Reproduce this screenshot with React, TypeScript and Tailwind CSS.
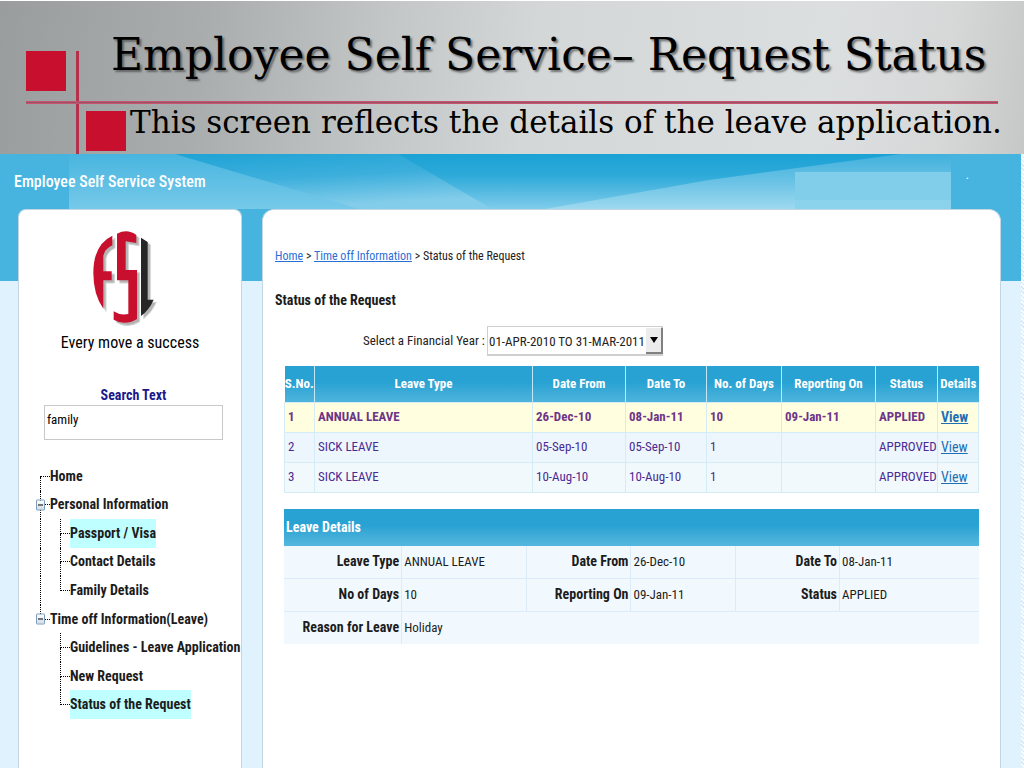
import React from "react";

type TreeNode = {
  label: string;
  level: 0 | 1;
  first?: boolean;
  last?: boolean;
  expandable?: boolean;
  trunk?: boolean;
  active?: boolean;
};

const tree: TreeNode[] = [
  { label: "Home", level: 0, first: true },
  { label: "Personal Information", level: 0, expandable: true },
  { label: "Passport / Visa", level: 1, trunk: true, active: true },
  { label: "Contact Details", level: 1, trunk: true },
  { label: "Family Details", level: 1, trunk: true, last: true },
  { label: "Time off Information(Leave)", level: 0, expandable: true, last: true },
  { label: "Guidelines - Leave Application", level: 1 },
  { label: "New Request", level: 1 },
  { label: "Status of the Request", level: 1, last: true, active: true },
];

const requests = [
  { no: 1, type: "ANNUAL LEAVE", from: "26-Dec-10", to: "08-Jan-11", days: 10, reporting: "09-Jan-11", status: "APPLIED" },
  { no: 2, type: "SICK LEAVE", from: "05-Sep-10", to: "05-Sep-10", days: 1, reporting: "", status: "APPROVED" },
  { no: 3, type: "SICK LEAVE", from: "10-Aug-10", to: "10-Aug-10", days: 1, reporting: "", status: "APPROVED" },
];

const columns = [
  { label: "S.No.", width: "w-[30px]" },
  { label: "Leave Type", width: "" },
  { label: "Date From", width: "w-[93px]" },
  { label: "Date To", width: "w-[81px]" },
  { label: "No. of Days", width: "w-[75px]" },
  { label: "Reporting On", width: "w-[94px]" },
  { label: "Status", width: "w-[62px]" },
  { label: "Details", width: "w-[41px]" },
];

function SlideHeader() {
  return (
    <header className="relative mt-px h-[153px] bg-[linear-gradient(97deg,#999d9e_0%,#a9adae_20%,#c3c7c8_38%,#d3d7d8_52%,#dcdfe0_80%,#d6d8d8_92%,#c6c8c8_100%)] font-['DejaVu_Serif',serif] text-black">
      <svg className="absolute left-[26px] top-[50px]" width="101" height="103" viewBox="0 0 101 103" aria-hidden="true">
        <rect x="0" y="0" width="40" height="40" fill="#c8102e" />
        <rect x="60" y="60" width="40" height="40" fill="#c8102e" />
        <rect x="50" y="0" width="3" height="103" fill="#b5304a" />
      </svg>
      <div className="absolute left-[26px] right-[26px] top-[100px] h-[3px] border-y border-[#c4566e] bg-[#99506a]" />
      <h1 className="relative whitespace-nowrap pl-[111px] pt-[26px] text-[44px] leading-[56px] [text-shadow:2px_2px_2px_rgba(70,70,70,0.7)]">
        Employee Self Service– Request Status
      </h1>
      <p className="relative whitespace-nowrap pl-[130px] pt-[19px] text-[31px] leading-[40px]">
        This screen reflects the details of the leave application.
      </p>
    </header>
  );
}

function Banner() {
  return (
    <div className="relative h-[55px] overflow-hidden">
      <div className="absolute inset-y-0 left-[69px] right-[70px]">
        <svg className="h-full w-full" viewBox="0 0 882 55" preserveAspectRatio="none" aria-hidden="true">
          <defs>
            <linearGradient id="b-left" x1="0" y1="0" x2="0" y2="1">
              <stop offset="0" stopColor="#48b5df" />
              <stop offset="1" stopColor="#76c9e9" />
            </linearGradient>
            <linearGradient id="b-mid" x1="0" y1="0" x2="0.3" y2="1">
              <stop offset="0" stopColor="#1fa3d5" />
              <stop offset="0.5" stopColor="#3dafdc" />
              <stop offset="1" stopColor="#84cdea" />
            </linearGradient>
            <linearGradient id="b-dark" x1="0" y1="0" x2="0" y2="1">
              <stop offset="0" stopColor="#1ba2d4" />
              <stop offset="0.4" stopColor="#2eaad9" />
              <stop offset="1" stopColor="#80cceb" />
            </linearGradient>
            <linearGradient id="b-right" x1="0" y1="0" x2="0" y2="1">
              <stop offset="0" stopColor="#41b1dd" />
              <stop offset="0.5" stopColor="#69c2e5" />
              <stop offset="1" stopColor="#9ed9ef" />
            </linearGradient>
          </defs>
          <rect width="882" height="55" fill="url(#b-left)" />
          <polygon points="106,0 332,0 423,55 290,55" fill="url(#b-mid)" />
          <polygon points="329,0 882,0 882,55 423,55" fill="url(#b-dark)" />
          <polygon points="476,55 640,26 832,0 882,0 882,55" fill="url(#b-right)" />
          <rect x="726" y="18" width="156" height="37" fill="#80ceea" />
          <rect x="726" y="46" width="156" height="9" fill="#93d5ed" opacity="0.6" />
        </svg>
      </div>
      <div className="relative flex items-start justify-between pl-[14px] pr-[52px] pt-[17px] text-white">
        <h2 className="text-[16px] font-medium leading-[22px]">Employee Self Service System</h2>
        <span className="text-[12px] leading-[8px]">.</span>
      </div>
    </div>
  );
}

function Logo() {
  const f = "M157 48 Q100 75 100 160 Q100 225 130 267 L130 182 L155 182 L155 155 L130 155 L130 108 Q134 88 157 77Z";
  const s = "M171 42 Q202 26 229 46 L229 70 L197 65 L197 151 L231 151 L231 298 Q195 320 161 300 L161 275 Q180 288 205 283 L205 182 L171 182Z";
  const l = "M243 54 L263 67 L263 240 L281 240 Q268 270 243 289Z";
  return (
    <svg width="70" height="100" viewBox="90 25 210 300" role="img" aria-label="FSL">
      <g transform="translate(8 8)" fill="#b4b4b4" stroke="#d6d6d6" strokeWidth="3">
        <path d={f} />
        <path d={s} />
        <path d={l} />
      </g>
      <path fill="#c8102e" d={f} />
      <path fill="#c8102e" d={s} />
      <path fill="#262626" d={l} />
    </svg>
  );
}

function Toggle({ label }: { label: string }) {
  return (
    <button
      type="button"
      aria-label={"Collapse " + label}
      className="absolute left-0 top-1/2 flex h-[11px] w-[9px] -translate-y-1/2 items-center justify-center rounded-[1px] border border-[#7b9ebd] bg-gradient-to-b from-white to-[#d3dbe3]"
    >
      <span className="h-px w-[5px] bg-black" />
    </button>
  );
}

function TreeRow({ node }: { node: TreeNode }) {
  const line = "border-dotted border-black ";
  return (
    <li className="relative flex items-stretch">
      {node.level === 0 ? (
        <span className="flex w-[14px] flex-col pl-1">
          <span className={line + "flex-1 border-b " + (node.first ? "" : "border-l")} />
          <span className={line + "flex-1 " + (node.last ? "" : "border-l")} />
        </span>
      ) : (
        <>
          <span className="flex w-6 pl-1">
            <span className={line + (node.trunk ? "border-l" : "")} />
          </span>
          <span className="flex w-[10px] flex-col">
            <span className={line + "flex-1 border-b border-l"} />
            <span className={line + "flex-1 " + (node.last ? "" : "border-l")} />
          </span>
        </>
      )}
      {node.expandable && <Toggle label={node.label} />}
      <a
        href="#"
        className={"flex items-center whitespace-nowrap " + (node.active ? "bg-[#bfffff]" : "")}
      >
        {node.label}
      </a>
    </li>
  );
}

function Sidebar() {
  return (
    <aside className="flex w-[224px] shrink-0 flex-col rounded-t-lg border border-b-0 border-[#c3d6e2] bg-white">
      <div className="flex flex-col items-center pt-[18px]">
        <div className="-ml-[10px]">
          <Logo />
        </div>
        <p className="pt-[5px] text-[16px] leading-5">Every move a success</p>
      </div>
      <div className="flex flex-col pl-[25px] pr-[18px] pt-8">
        <label htmlFor="search" className="text-center text-[14px] font-bold leading-5 text-[#1a1a8c]">
          Search Text
        </label>
        <input
          id="search"
          type="text"
          defaultValue="family"
          className="h-[35px] w-full border border-[#c8c8c8] bg-white px-[2px] pb-[7px] text-[13px] outline-none"
        />
      </div>
      <nav aria-label="Employee menu" className="pl-[17px] pt-[22px]">
        <ul className="grid h-[257px] grid-rows-9 text-[14px] font-bold text-[#1c1c1c]">
          {tree.map((node) => (
            <TreeRow key={node.label} node={node} />
          ))}
        </ul>
      </nav>
    </aside>
  );
}

function RequestTable() {
  return (
    <table className="w-full table-fixed border-collapse text-[13px] text-[#4b2a94]">
      <thead>
        <tr className="h-[36px] bg-gradient-to-b from-[#27a2d3] from-45% to-[#4db4dc] text-white">
          {columns.map((c) => (
            <th key={c.label} className={"whitespace-nowrap border-l border-[#c4e6f5] p-0 first:border-l-0 " + c.width}>
              {c.label}
            </th>
          ))}
        </tr>
      </thead>
      <tbody>
        {requests.map((r, i) => (
          <tr
            key={r.no}
            className={"h-[30px] " + (i === 0 ? "bg-[#ffffdf] font-bold text-[#6d3489]" : i === 1 ? "bg-[#edf6fc]" : "bg-[#f1f9fd]")}
          >
            {[r.no, r.type, r.from, r.to, r.days, r.reporting, r.status].map((v, k) => (
              <td key={k} className="whitespace-nowrap border border-[#d3ecf6] px-[3px] py-0">
                {v}
              </td>
            ))}
            <td className="border border-[#d3ecf6] px-[3px] py-0 text-[14px]">
              <a href="#" className="text-[#1f6fb5] underline">
                View
              </a>
            </td>
          </tr>
        ))}
      </tbody>
    </table>
  );
}

function DetailLabel({ children, width = "" }: { children: React.ReactNode; width?: string }) {
  return <th scope="row" className={"whitespace-nowrap border-b border-r border-[#dcebf9] px-[2px] py-0 text-right text-[14px] " + width}>{children}</th>;
}

function DetailValue({ children, width = "" }: { children: React.ReactNode; width?: string }) {
  return <td className={"whitespace-nowrap border-b border-r border-[#dcebf9] px-[2px] py-0 last:border-r-0 " + width}>{children}</td>;
}

function LeaveDetails() {
  return (
    <section className="mt-4 text-[13px] text-[#1c1c1c]">
      <h3 className="bg-gradient-to-b from-[#27a2d3] from-45% to-[#55b7de] px-[2px] text-[14px] font-bold leading-[37px] text-white">
        Leave Details
      </h3>
      <table className="w-full table-fixed border-separate border-spacing-0 bg-[#f2f9fe]">
        <tbody>
          <tr className="h-[33px]">
            <DetailLabel width="w-[17%]">Leave Type</DetailLabel>
            <DetailValue width="w-[18%]">ANNUAL LEAVE</DetailValue>
            <DetailLabel width="w-[15%]">Date From</DetailLabel>
            <DetailValue width="w-[15%]">26-Dec-10</DetailValue>
            <DetailLabel width="w-[15%]">Date To</DetailLabel>
            <DetailValue>08-Jan-11</DetailValue>
          </tr>
          <tr className="h-[33px]">
            <DetailLabel>No of Days</DetailLabel>
            <DetailValue>10</DetailValue>
            <DetailLabel>Reporting On</DetailLabel>
            <DetailValue>09-Jan-11</DetailValue>
            <DetailLabel>Status</DetailLabel>
            <DetailValue>APPLIED</DetailValue>
          </tr>
          <tr className="h-[32px]">
            <th scope="row" className="whitespace-nowrap border-r border-[#dcebf9] px-[2px] py-0 text-right text-[14px]">Reason for Leave</th>
            <td colSpan={5} className="px-[2px] py-0">Holiday</td>
          </tr>
        </tbody>
      </table>
    </section>
  );
}

function Content() {
  return (
    <main className="min-w-0 flex-1 rounded-t-xl border border-b-0 border-[#c3d6e2] bg-white pb-8 pl-[21px] pr-[21px] pt-[36px]">
      <div className="-ml-[9px]">
        <nav aria-label="Breadcrumb" className="text-[12px] leading-5 text-[#222]">
          <a href="#" className="text-[#2a6fd6] underline">Home</a>
          {" > "}
          <a href="#" className="text-[#2a6fd6] underline">Time off Information</a>
          {" > "}
          <span>Status of the Request</span>
        </nav>
        <h2 className="pt-6 text-[14px] font-bold leading-5 text-[#1c1c1c]">Status of the Request</h2>
      </div>
      <div className="flex items-center pb-[10px] pl-[79px] pt-4 text-[13px] text-[#222]">
        <label htmlFor="year" className="w-[124px] whitespace-nowrap">Select a Financial Year :</label>
        <div className="relative">
          <select
            id="year"
            className="h-[30px] w-[176px] appearance-none border border-b-2 border-r-2 border-[#cfcfcf] bg-white pl-px pt-[3px] outline-none"
          >
            <option>01-APR-2010 TO 31-MAR-2011</option>
          </select>
          <span className="pointer-events-none absolute inset-y-[2px] right-0 flex w-[17px] items-center justify-center border-b-2 border-r-2 border-[#808080] bg-[#ececec]">
            <svg width="8" height="6" viewBox="0 0 8 6" aria-hidden="true">
              <path d="M0 0h8L4 6z" fill="#000" />
            </svg>
          </span>
        </div>
      </div>
      <RequestTable />
      <LeaveDetails />
    </main>
  );
}

export default function App() {
  return (
    <div className="flex min-h-screen flex-col bg-white">
      <SlideHeader />
      <div className="flex flex-1 bg-[repeating-linear-gradient(45deg,#d5e8f4_0_1px,#f5fbff_1px_3px)] pr-[3px] font-['Roboto_Condensed','Liberation_Sans',sans-serif] text-black">
        <div className="flex flex-1 flex-col bg-[linear-gradient(to_bottom,#46b4df_127px,#dff2fe_127px)]">
          <Banner />
          <div className="flex flex-1 gap-5 pl-[18px] pr-5">
            <Sidebar />
            <Content />
          </div>
        </div>
      </div>
    </div>
  );
}
